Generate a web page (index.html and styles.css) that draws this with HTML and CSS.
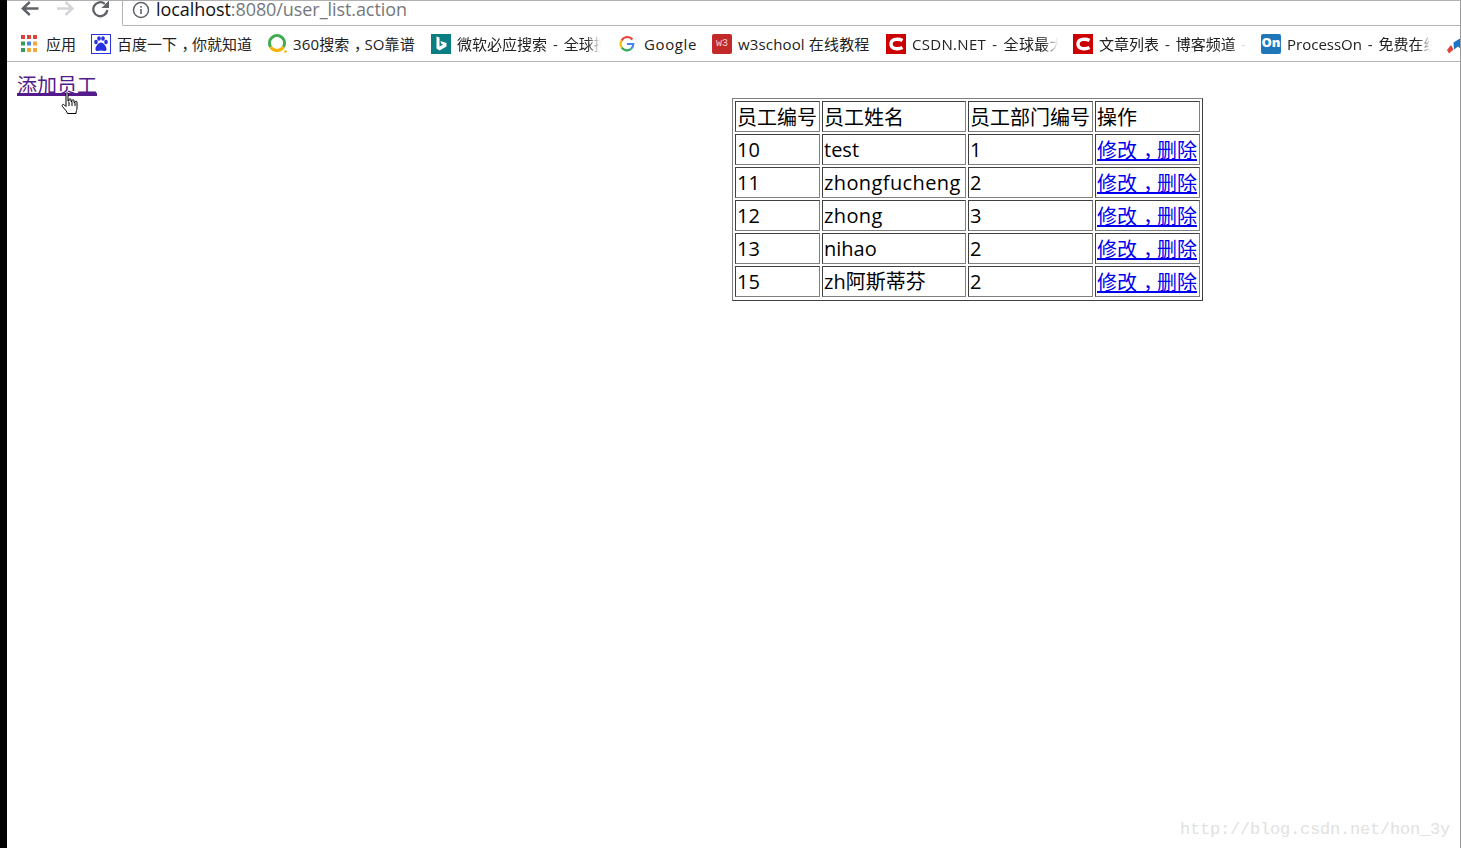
FILE: index.html
```html
<!DOCTYPE html>
<html lang="zh">
<head>
<meta charset="utf-8">
<title>user_list</title>
<link rel="stylesheet" href="styles.css">
</head>
<body>
<div class="edge"></div>
<div class="window">
  <header class="toolbar">
    <div class="nav">
      <svg class="nav-icon" viewBox="0 0 20 20"><path d="M18.500 8.500H3.500M9.800 2L2.800 8.500L9.800 15" fill="none" stroke="#5f6368" stroke-width="2.400"/></svg>
      <svg class="nav-icon" viewBox="0 0 20 20"><path d="M2 8.500H16.500M10.500 2L17.500 8.500L10.500 15" fill="none" stroke="#d3d5d8" stroke-width="2.400"/></svg>
      <svg class="nav-icon" viewBox="0 0 20 20"><path d="M17.300 10A7 7 0 1 1 14.800 3.800" fill="none" stroke="#5f6368" stroke-width="2.300"/><path d="M19 0.500V8H11.500Z" fill="#5f6368"/></svg>
    </div>
    <div class="omnibox">
      <svg class="info" viewBox="0 0 18 18"><circle cx="9" cy="9" r="7.500" fill="none" stroke="#5f6368" stroke-width="1.500"/><rect x="8.200" y="8" width="1.600" height="5" fill="#5f6368"/><rect x="8.200" y="5" width="1.600" height="1.700" fill="#5f6368"/></svg>
      <span class="url"><span class="host">localhost</span>:8080/user_list.action</span>
    </div>
  </header>
  <nav class="bookmarks">
    <a class="bm bm-apps">
      <svg class="ico" viewBox="0 0 20 20"><g fill="#d9453d"><rect x="2" y="1" width="4" height="4"/><rect x="8" y="1" width="4" height="4"/><rect x="14" y="1" width="4" height="4"/></g><g fill="#4a86e8"><rect x="2" y="7.500" width="4" height="4" fill="#3f9a5a"/><rect x="8" y="7.500" width="4" height="4"/><rect x="14" y="7.500" width="4" height="4" fill="#f2a93b"/></g><g fill="#f2a93b"><rect x="2" y="14" width="4" height="4" fill="#3f9a5a"/><rect x="8" y="14" width="4" height="4"/><rect x="14" y="14" width="4" height="4"/></g></svg>
      <span class="lbl">应用</span>
    </a>
    <a class="bm">
      <svg class="ico" viewBox="0 0 20 20"><rect x="0.500" y="0.500" width="19" height="19" fill="#fff" stroke="#2932e1"/><g fill="#2932e1"><ellipse cx="5" cy="8" rx="1.800" ry="2.300"/><ellipse cx="8" cy="4.500" rx="1.800" ry="2.300"/><ellipse cx="12" cy="4.500" rx="1.800" ry="2.300"/><ellipse cx="15" cy="8" rx="1.800" ry="2.300"/><path d="M10 8.500C7.500 8.500 4 13 4.500 15.500C5 18 8 16.500 10 16.500C12 16.500 15 18 15.500 15.500C16 13 12.500 8.500 10 8.500Z"/></g></svg>
      <span class="lbl w-135">百度一<span class="pre">下</span><span class="cm">，</span>你就知道</span>
    </a>
    <a class="bm">
      <svg class="ico" viewBox="0 0 20 20"><path d="M3.600 13A7.500 7.500 0 1 1 16.400 13" fill="none" stroke="#3cab4e" stroke-width="3"/><path d="M3.600 13A7.500 7.500 0 0 0 16.400 13" fill="none" stroke="#f5b301" stroke-width="3"/><circle cx="18.500" cy="17.500" r="1.300" fill="#f5b301"/></svg>
      <span class="lbl lbl-360">360搜<span class="pre">索</span><span class="cm">，</span>SO靠谱</span>
    </a>
    <a class="bm">
      <svg class="ico" viewBox="0 0 20 20"><rect width="20" height="20" fill="#0a7e80"/><path d="M5.500 2.500L8.500 3.500V12.500L12 10.500L10 9.500L9.500 7L15.500 9V12.500L8.500 16.500L5.500 14.500Z" fill="#fff"/></svg>
      <span class="lbl lbl-cut w-144">微软必应搜索 - 全球搜索</span>
    </a>
    <a class="bm bm-google">
      <svg class="ico" viewBox="0 0 20 20"><path d="M16 5A7 7 0 0 0 4.200 6" fill="none" stroke="#ea4335" stroke-width="2.400"/><path d="M4.200 6A7 7 0 0 0 4.200 14" fill="none" stroke="#fbbc05" stroke-width="2.400"/><path d="M4.200 14A7 7 0 0 0 14.500 15.500" fill="none" stroke="#34a853" stroke-width="2.400"/><path d="M14.500 15.500A7 7 0 0 0 17 10H10" fill="none" stroke="#4285f4" stroke-width="2.400"/></svg>
      <span class="lbl lbl-google">Google</span>
    </a>
    <a class="bm">
      <span class="ico w3">w3</span>
      <span class="lbl lbl-w3">w3school 在线教程</span>
    </a>
    <a class="bm">
      <svg class="ico" viewBox="0 0 20 20"><rect width="20" height="20" fill="#cc0000"/><path d="M16.500 6.500C13 4.500 5 4.500 5 10C5 15.500 13 15.500 16.500 13.500" fill="none" stroke="#fff" stroke-width="3.400"/></svg>
      <span class="lbl lbl-cut lbl-csdn w-146">CSDN.NET - 全球最大中文IT社区</span>
    </a>
    <a class="bm">
      <svg class="ico" viewBox="0 0 20 20"><rect width="20" height="20" fill="#cc0000"/><path d="M16.500 6.500C13 4.500 5 4.500 5 10C5 15.500 13 15.500 16.500 13.500" fill="none" stroke="#fff" stroke-width="3.400"/></svg>
      <span class="lbl lbl-cut w-147">文章列表 - 博客频道 - CSDN.NET</span>
    </a>
    <a class="bm">
      <span class="ico on">On</span>
      <span class="lbl lbl-cut w-145">ProcessOn - 免费在线作图</span>
    </a>
    <a class="bm">
      <svg class="ico" viewBox="0 0 20 20"><path d="M20 0L15 16L11 12.500L7 15.500L6.500 8.500Z" fill="#1a73c8"/><path d="M0 16L4 11L6.500 15.500L2 19.500Z" fill="#d9453d"/></svg>
    </a>
  </nav>
  <main class="content">
    <div class="add"><a class="add-link" href="#add">添加员工</a></div>
    <table class="users" border="1">
      <colgroup><col class="c-id"><col class="c-name"><col class="c-dept"><col class="c-op"></colgroup>
      <tr class="head"><td>员工编号</td><td>员工姓名</td><td>员工部门编号</td><td>操作</td></tr>
      <tr><td>10</td><td>test</td><td>1</td><td class="op"><a href="#e">修<span class="pre">改</span><span class="cm">，</span>删除</a></td></tr>
      <tr><td>11</td><td class="lat">zhongfucheng</td><td>2</td><td class="op"><a href="#e">修<span class="pre">改</span><span class="cm">，</span>删除</a></td></tr>
      <tr><td>12</td><td class="lat">zhong</td><td>3</td><td class="op"><a href="#e">修<span class="pre">改</span><span class="cm">，</span>删除</a></td></tr>
      <tr><td>13</td><td>nihao</td><td>2</td><td class="op"><a href="#e">修<span class="pre">改</span><span class="cm">，</span>删除</a></td></tr>
      <tr><td>15</td><td>zh阿斯蒂芬</td><td>2</td><td class="op"><a href="#e">修<span class="pre">改</span><span class="cm">，</span>删除</a></td></tr>
    </table>
  </main>
</div>
<svg class="cursor" viewBox="0 0 17 23"><path d="M5 1.500C5 0.500 7 0.500 7 1.500V9L8 9V7.500C8 6.500 10 6.500 10 7.500V9.500L11 9.500V8.500C11 7.500 13 7.500 13 8.500V10.500L14 10.500V10C14 9 16 9 16 10V16C16 18 15 19 15 21.500H6.500C6 19.500 4 17.500 1.500 14.500C0.500 13 2 11.500 3.500 13L5 14.500Z" fill="#fff" stroke="#000" stroke-width="1"/><path d="M8 10V14M11 10V14M14 11V14" stroke="#000" stroke-width="1"/></svg>
<div class="watermark">http://blog.csdn.net/hon_3y</div>
</body>
</html>
```
FILE: styles.css
```css
* { box-sizing: border-box; }
html, body { height: 100%; }
body {
  margin: 0;
  display: flex;
  overflow: hidden;
  background: #fff;
  font-family: "Open Sans", "Noto Sans CJK SC", sans-serif;
  color: #000;
}
.edge { width: 7px; flex: none; background: #000; }
.window {
  flex: 1;
  min-width: 0;
  display: flex;
  flex-direction: column;
  border-top: 1px solid #b0b0b0;
  border-right: 1px solid #9a9a9a;
}
.toolbar { height: 25px; display: flex; flex: none; overflow: hidden; }
.nav { width: 115px; padding-left: 13px; display: flex; gap: 15px; flex: none; margin-top: -1px; }
.nav-icon { width: 20px; height: 20px; flex: none; }
.omnibox {
  flex: 1;
  border-left: 1px solid #b4b4b4;
  border-bottom: 1px solid #b4b4b4;
  border-bottom-left-radius: 2px;
  display: flex;
  align-items: flex-start;
  padding-left: 9px;
}
.info { width: 18px; height: 18px; flex: none; margin-right: 6px; }
.url { font-size: 18px; line-height: 16px; color: #75787d; white-space: nowrap; letter-spacing: -0.07px; }
.host { color: #111; }
.bookmarks {
  height: 36px;
  flex: none;
  display: flex;
  align-items: center;
  padding-left: 12px;
  gap: 15px;
  border-bottom: 1px solid #b4b4b4;
  overflow: hidden;
  white-space: nowrap;
}
.bm { display: flex; align-items: center; gap: 6px; flex: none; font-size: 15px; color: #222; }
.bm-apps { gap: 7px; }
.bm-google { margin-left: 2px; gap: 8px; }
.bm-google .ico { width: 18px; height: 18px; }
.ico { width: 20px; height: 20px; flex: none; display: block; }
.lbl { line-height: 20px; }
.w-135 { width: 135px; }
.w-144 { width: 144px; }
.w-145 { width: 145px; }
.w-146 { width: 146px; }
.w-147 { width: 147px; }
.lbl-360 { width: 123px; letter-spacing: 0.15px; }
.lbl-google { width: 53px; letter-spacing: 0.6px; }
.lbl-w3 { width: 133px; letter-spacing: 0.15px; }
.lbl-csdn { letter-spacing: 0.3px; }
.lbl-cut {
  overflow: hidden;
  word-spacing: 2px;
  -webkit-mask-image: linear-gradient(90deg, #000 90%, transparent);
  mask-image: linear-gradient(90deg, #000 90%, transparent);
}
.pre { letter-spacing: 0.3em; }
.cm { letter-spacing: -0.3em; }
.w3 {
  background: #c22a2a;
  border-radius: 2px;
  color: #f3d0d0;
  font-size: 10px;
  line-height: 20px;
  text-align: center;
  font-family: "Liberation Mono", monospace;
}
.on {
  background: #1f76b8;
  border-radius: 2px;
  color: #fff;
  font-size: 13px;
  font-weight: 800;
  line-height: 17px;
  text-align: center;
}
.content {
  flex: 1;
  display: grid;
  grid-template-columns: 1fr 1fr;
  align-content: start;
  padding: 10px 13px 0 10px;
}
.add { font-size: 20px; line-height: 27px; }
a { text-decoration-thickness: 2px; }
.add-link { color: #551a8b; text-decoration-thickness: 3px; text-underline-offset: 0; }
.users {
  table-layout: fixed;
  width: 471px;
  height: 203px;
  border-collapse: separate;
  border-spacing: 2px;
  border: 1px solid;
  border-color: #808080 #404040 #404040 #808080;
  padding-bottom: 1px;
  margin-top: 26px;
  font-size: 20px;
  line-height: 27px;
}
.users td {
  padding: 1px;
  border: 1px solid;
  border-color: #404040 #808080 #808080 #404040;
  white-space: nowrap;
  height: 31px;
}
.users .head td, .users .op { padding: 2px 1px 0; }
.users .lat { letter-spacing: 0.4px; }
.users a { color: #0000ee; }
.c-id { width: 85px; }
.c-name { width: 144px; }
.c-dept { width: 125px; }
.c-op { width: 105px; }
.cursor { position: absolute; left: 61px; top: 92px; width: 17px; height: 23px; }
.watermark {
  position: absolute;
  right: 11px;
  top: 819px;
  font-family: "Liberation Mono", monospace;
  font-size: 17px;
  letter-spacing: -0.2px;
  line-height: 22px;
  color: #e2e2de;
}
```
